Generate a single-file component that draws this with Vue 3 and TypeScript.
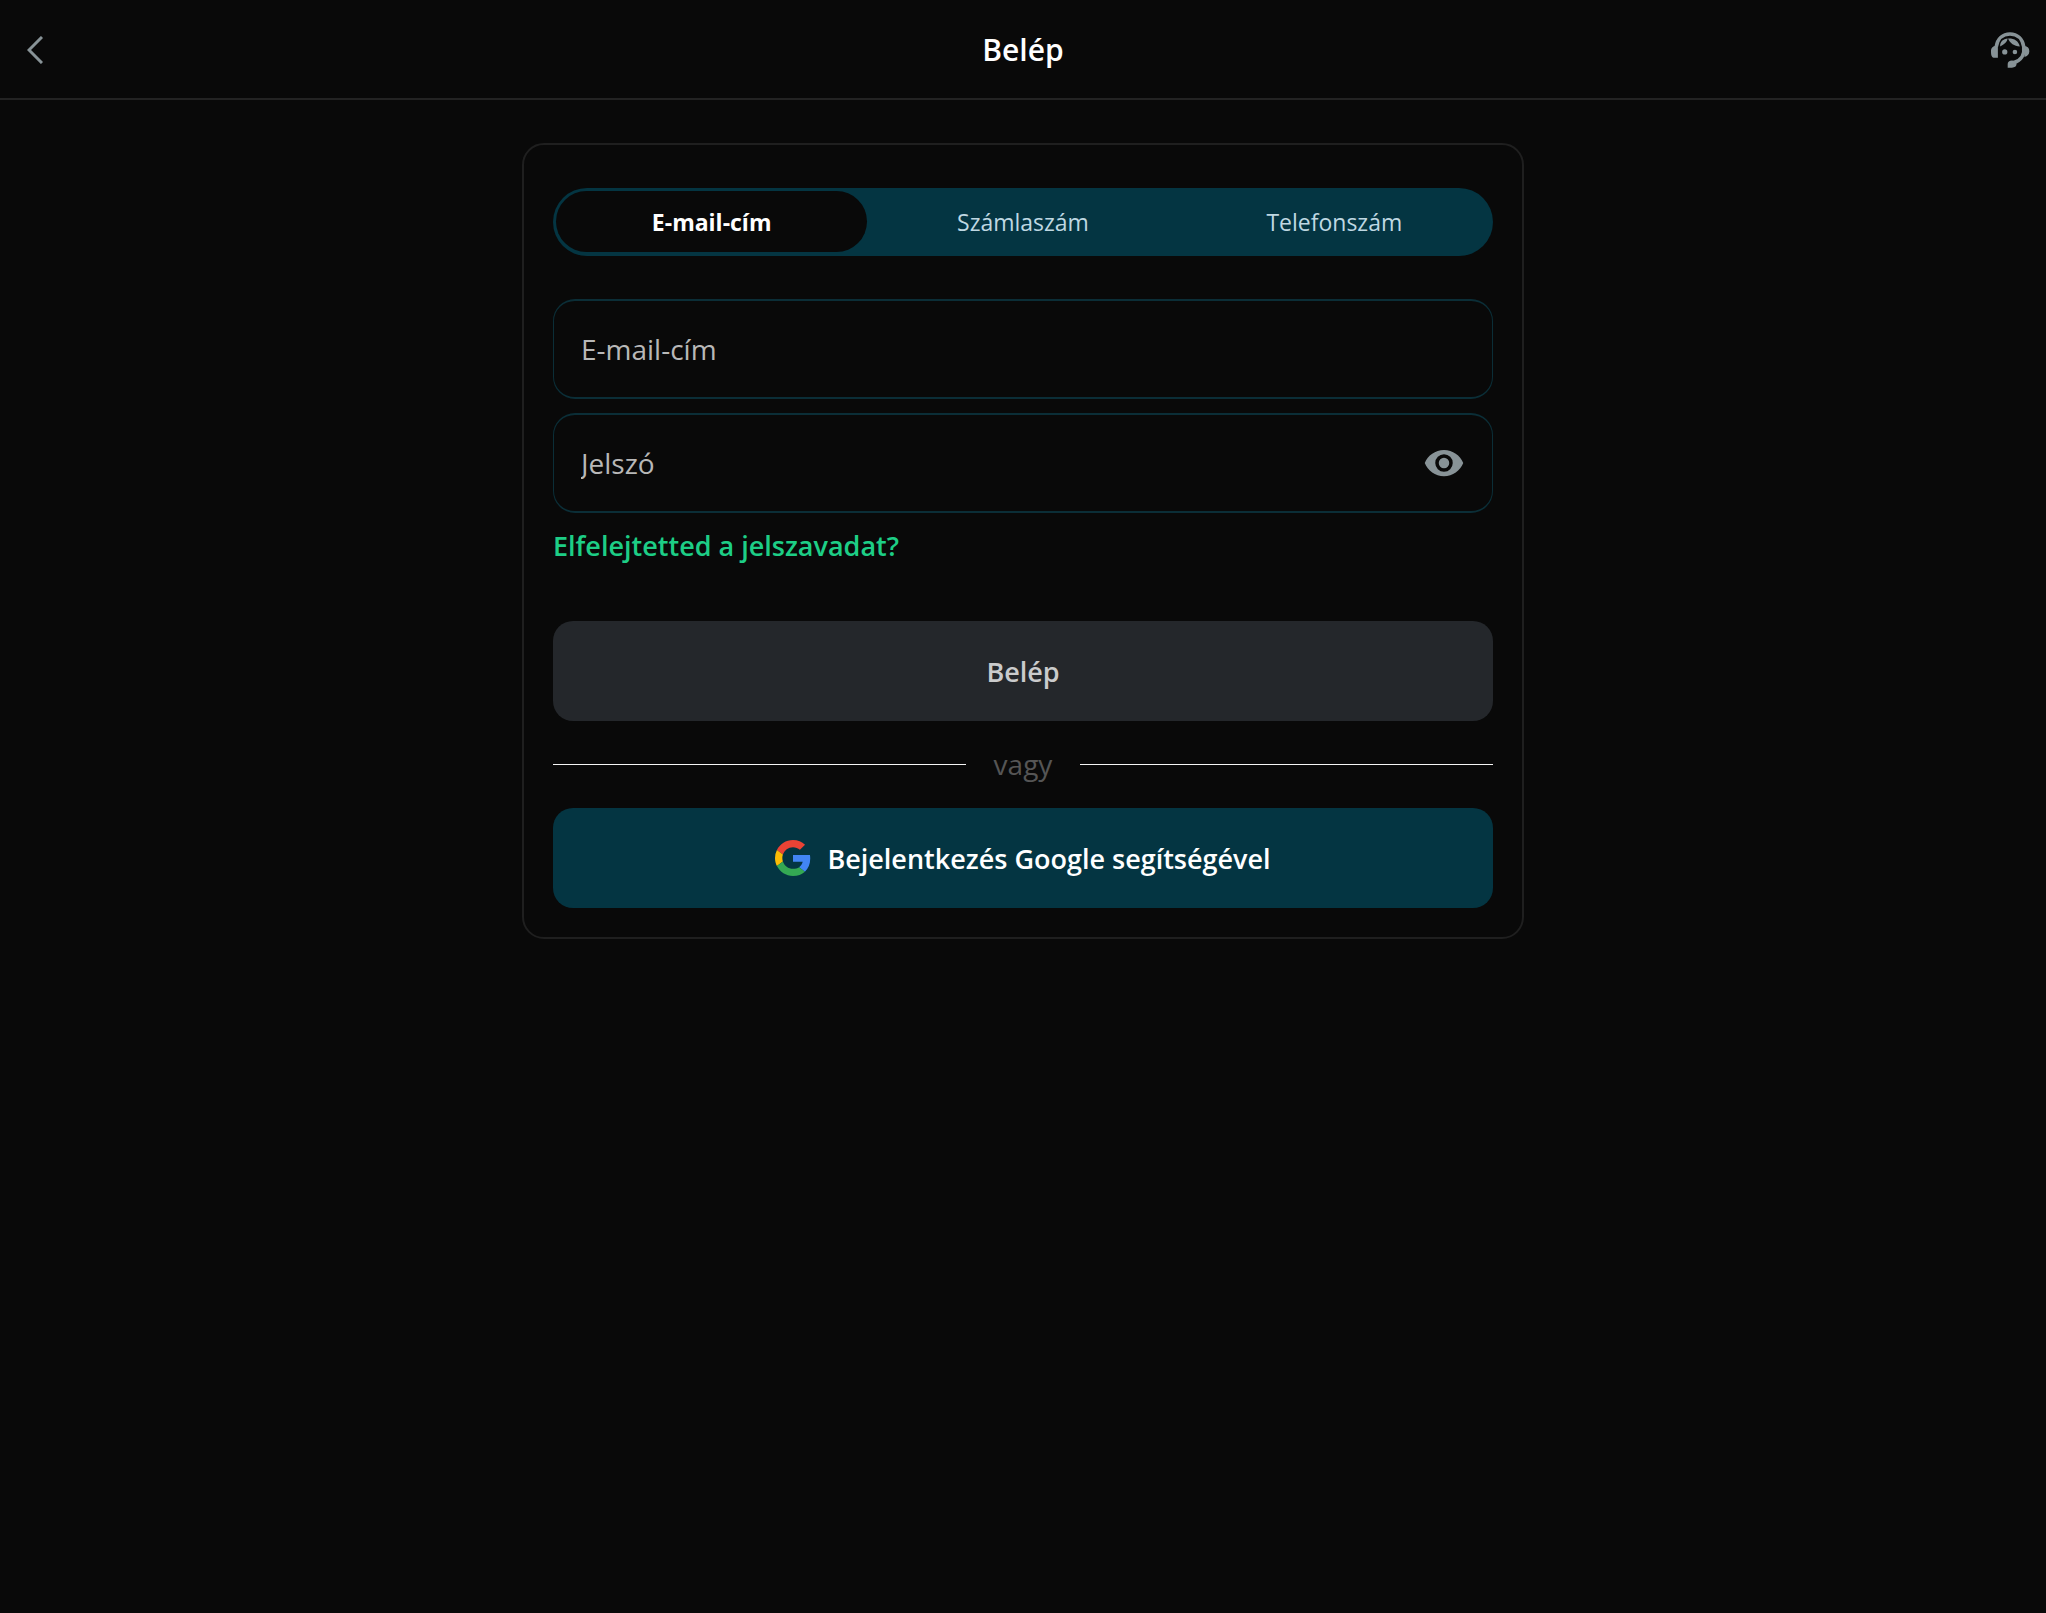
<script setup lang="ts">
import { ref } from 'vue'

interface LoginMethod {
  id: string
  label: string
}

const methods: LoginMethod[] = [
  { id: 'email', label: 'E-mail-cím' },
  { id: 'account', label: 'Számlaszám' },
  { id: 'phone', label: 'Telefonszám' },
]

const active = ref('email')
const login = ref('')
const password = ref('')
const revealed = ref(false)
</script>

<template>
  <div class="page">
    <header class="bar">
      <button class="icon-button" type="button" aria-label="Vissza">
        <svg class="back" viewBox="0 0 16 28" aria-hidden="true"><path d="M15 1 2 14l13 13" /></svg>
      </button>
      <h1>Belép</h1>
      <button class="icon-button" type="button" aria-label="Ügyfélszolgálat">
        <svg class="support" viewBox="0 0 120 116" aria-hidden="true">
          <path class="band" d="M18 48C22 23 38 9 60 9s38 14 42 39c3 24-8 42-30 48" />
          <path d="M23 44v38H13C5 82 2 75 2 63s5-19 21-19zM104 46c10 1 15 6 15 16s-6 15-15 17z" />
          <path d="M30 47c-1-14 9-23 23-24-2 11-10 18-23 24zM54 23c18-1 32 7 36 24-17-1-30-9-36-24z" />
          <circle cx="44" cy="64" r="8" />
          <circle cx="75" cy="64" r="7" />
          <path d="M53 112v-11c0-7 5-11 13-11s14 4 14 11-6 11-14 11z" />
        </svg>
      </button>
    </header>

    <main>
      <form class="card" @submit.prevent>
        <div class="tabs" role="tablist">
          <button
            v-for="m in methods"
            :key="m.id"
            type="button"
            role="tab"
            class="tab"
            :class="{ active: m.id === active }"
            :aria-selected="m.id === active"
            @click="active = m.id"
          >
            {{ m.label }}
          </button>
        </div>

        <div class="field">
          <input v-model="login" type="text" aria-label="E-mail-cím" placeholder="E-mail-cím" />
        </div>
        <div class="field">
          <input v-model="password" :type="revealed ? 'text' : 'password'" aria-label="Jelszó" placeholder="Jelszó" />
          <button class="icon-button" type="button" aria-label="Jelszó megjelenítése" @click="revealed = !revealed">
            <svg class="eye" viewBox="0 0 24 24" aria-hidden="true">
              <path d="M12 4.500C7 4.500 2.730 7.610 1 12c1.730 4.390 6 7.500 11 7.500s9.270-3.110 11-7.500c-1.730-4.390-6-7.500-11-7.500zM12 17a5 5 0 1 1 0-10 5 5 0 0 1 0 10zm0-8a3 3 0 1 0 0 6 3 3 0 0 0 0-6z" />
            </svg>
          </button>
        </div>
        <a class="forgot" href="#">Elfelejtetted a jelszavadat?</a>

        <button class="action submit" type="submit">Belép</button>
        <div class="divider"><span>vagy</span></div>
        <button class="action google" type="button">
          <svg viewBox="0 0 48 48" aria-hidden="true">
            <path fill="#ea4335" d="M24 9.500c3.540 0 6.710 1.220 9.210 3.600l6.850-6.850C35.900 2.380 30.470 0 24 0 14.620 0 6.510 5.380 2.560 13.220l7.980 6.190C12.430 13.720 17.740 9.500 24 9.500z" />
            <path fill="#4285f4" d="M46.980 24.550c0-1.570-.15-3.090-.38-4.550H24v9.020h12.940c-.58 2.960-2.260 5.480-4.780 7.180l7.730 6c4.510-4.180 7.090-10.360 7.090-17.650z" />
            <path fill="#fbbc05" d="M10.530 28.590A14.500 14.500 0 0 1 9.770 24c0-1.600.27-3.140.76-4.590l-7.980-6.190A23.900 23.900 0 0 0 0 24c0 3.880.92 7.540 2.560 10.780z" />
            <path fill="#34a853" d="M24 48c6.480 0 11.930-2.130 15.890-5.810l-7.730-6c-2.150 1.450-4.920 2.300-8.160 2.300-6.260 0-11.570-4.220-13.470-9.910l-7.980 6.190C6.510 42.620 14.620 48 24 48z" />
          </svg>
          Bejelentkezés Google segítségével
        </button>
      </form>
    </main>
  </div>
</template>

<style>
body {
  background: #090909;
}
</style>

<style scoped>
.page {
  font-family: "Open Sans", "Noto Sans", sans-serif;
  font-size: 28px;
  color: #fff;
}

button {
  font: inherit;
  border: 0;
  padding: 0;
  cursor: pointer;
}

.icon-button {
  display: flex;
  background: none;
  color: #889397;
}

.icon-button svg {
  display: block;
  fill: currentColor;
}

.bar {
  display: grid;
  grid-template-columns: 40px 1fr 40px;
  align-items: center;
  box-sizing: border-box;
  height: 100px;
  padding: 2px 16px 0 27px;
  border-bottom: 2px solid #232323;
}

.bar h1 {
  margin: 0;
  padding-right: 11px;
  font-size: 30px;
  font-weight: 600;
  line-height: 40px;
  text-align: center;
}

.icon-button .back {
  width: 16px;
  height: 28px;
  fill: none;
  stroke: currentColor;
  stroke-width: 3;
}

.support {
  width: 40px;
  height: 38px;
}

.icon-button .band {
  fill: none;
  stroke: currentColor;
  stroke-width: 11;
}

.card {
  display: flex;
  flex-direction: column;
  box-sizing: border-box;
  width: 1002px;
  max-width: 100%;
  margin: 43px auto 0;
  padding: 43px 29px 29px;
  border: 2px solid #1f1f1f;
  border-radius: 22px;
}

.tabs {
  display: flex;
  margin-bottom: 43px;
  padding: 3px 3px 4px;
  border-radius: 34px;
  background: #043542;
}

.tab {
  flex: 1;
  height: 61px;
  border-radius: 31px;
  background: none;
  color: #bfd8e2;
  font-size: 23px;
}

.tab.active {
  background: #090909;
  color: #fff;
  font-weight: 700;
}

.field {
  display: flex;
  align-items: center;
  box-sizing: border-box;
  height: 100px;
  margin-bottom: 14px;
  padding: 0 27px;
  border: solid #0b2e37;
  border-width: 2px 1px;
  border-radius: 22px;
}

.field input {
  flex: 1;
  min-width: 0;
  padding: 0;
  border: 0;
  outline: 0;
  background: none;
  color: #fff;
  font: inherit;
}

.field input::placeholder {
  color: #b8b8b8;
  opacity: 1;
}

.eye {
  width: 42px;
  height: 42px;
}

.forgot {
  align-self: flex-start;
  margin-bottom: 56px;
  color: #1dce86;
  font-size: 27px;
  font-weight: 600;
  line-height: 38px;
  text-decoration: none;
}

.action {
  display: flex;
  align-items: center;
  justify-content: center;
  gap: 16px;
  height: 100px;
  border-radius: 20px;
  font-size: 27px;
  font-weight: 600;
}

.submit {
  background: #24272b;
  color: #cacbcc;
}

.divider {
  display: flex;
  align-items: center;
  gap: 28px;
  margin: 23px 0 24px;
  color: #555;
  line-height: 40px;
}

.divider::before,
.divider::after {
  content: "";
  flex: 1;
  height: 1px;
  background: #f5f5f5;
}

.google {
  background: #043542;
  color: #fff;
}

.google svg {
  width: 36px;
  height: 36px;
}
</style>
